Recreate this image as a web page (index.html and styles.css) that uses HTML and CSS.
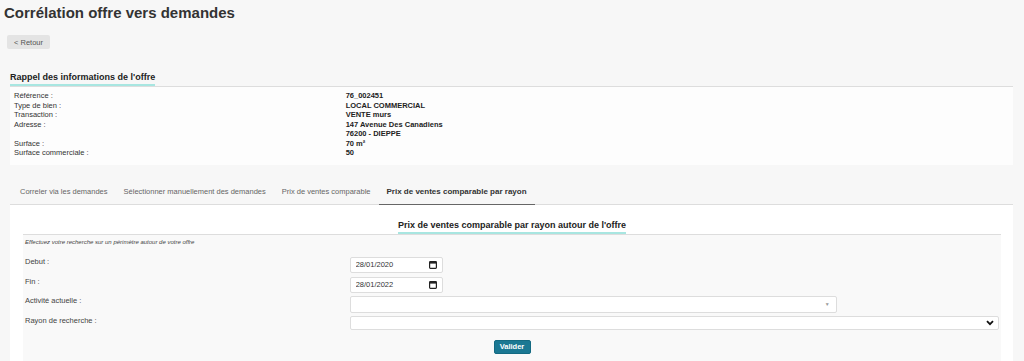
FILE: index.html
```html
<!DOCTYPE html>
<html lang="fr">
<head>
    <meta charset="UTF-8">
    <meta name="viewport" content="width=device-width, initial-scale=1.0">
    <title>Corrélation offre vers demandes</title>
    <link rel="stylesheet" href="styles.css">
</head>
<body>
    <h1>Corrélation offre vers demandes</h1>
    <button type="button" class="btn-back">&lt; Retour</button>

    <div class="section">
        <h2 class="underlined">Rappel des informations de l'offre</h2>
        <div class="info-panel">
            <div class="info-row"><span>Référence :</span><b>76_002451</b></div>
            <div class="info-row"><span>Type de bien :</span><b>LOCAL COMMERCIAL</b></div>
            <div class="info-row"><span>Transaction :</span><b>VENTE murs</b></div>
            <div class="info-row"><span>Adresse :</span><b>147 Avenue Des Canadiens<br>76200 - DIEPPE</b></div>
            <div class="info-row"><span>Surface :</span><b>70 m²</b></div>
            <div class="info-row"><span>Surface commerciale :</span><b>50</b></div>
        </div>
    </div>

    <div class="section tabs-section">
        <ul class="nav-tabs">
            <li>Correler via les demandes</li>
            <li>Sélectionner manuellement des demandes</li>
            <li>Prix de ventes comparable</li>
            <li class="active">Prix de ventes comparable par rayon</li>
        </ul>
        <div class="tab-content">
            <h3 class="underlined">Prix de ventes comparable par rayon autour de l'offre</h3>
            <form class="search-form">
                <p class="hint">Effectuez votre recherche sur un périmètre autour de votre offre</p>
                <div class="form-row first">
                    <label for="debut">Debut :</label>
                    <div class="date-field">
                        <input type="text" id="debut" value="28/01/2020">
                        <svg width="8" height="8" viewBox="0 0 8 8"><rect x="0.6" y="0.6" width="6.8" height="6.8" rx="0.8" fill="none" stroke="#222" stroke-width="1.2"/><rect x="0.6" y="0.6" width="6.8" height="2" fill="#222"/></svg>
                    </div>
                </div>
                <div class="form-row">
                    <label for="fin">Fin :</label>
                    <div class="date-field">
                        <input type="text" id="fin" value="28/01/2022">
                        <svg width="8" height="8" viewBox="0 0 8 8"><rect x="0.6" y="0.6" width="6.8" height="6.8" rx="0.8" fill="none" stroke="#222" stroke-width="1.2"/><rect x="0.6" y="0.6" width="6.8" height="2" fill="#222"/></svg>
                    </div>
                </div>
                <div class="form-row">
                    <label>Activité actuelle :</label>
                    <div class="combo">
                        <span class="combo-arrow">▼</span>
                    </div>
                </div>
                <div class="form-row">
                    <label for="rayon">Rayon de recherche :</label>
                    <div class="select-wrap">
                        <select id="rayon"><option></option></select>
                        <svg class="chevron" width="8" height="6" viewBox="0 0 8 6"><path d="M1 1.2 L4 4.2 L7 1.2" fill="none" stroke="#111" stroke-width="1.8"/></svg>
                    </div>
                </div>
                <div class="form-actions">
                    <button type="submit" class="btn-primary">Valider</button>
                </div>
            </form>
        </div>
    </div>
</body>
</html>
```
FILE: styles.css
```css
body {
    margin: 0;
    padding: 3px 0 0 0;
    background-color: #f7f7f7;
    font-family: "Liberation Sans", Arial, sans-serif;
    color: #333;
}

h1 {
    margin: 0 0 12px 4px;
    font-size: 15px;
    line-height: 20px;
    color: #333;
}

.btn-back {
    display: block;
    margin-left: 7px;
    width: 43px;
    height: 14px;
    padding: 0;
    font-family: inherit;
    font-size: 7.5px;
    color: #555;
    background-color: #e4e4e4;
    border: none;
    border-radius: 2px;
}

.section {
    margin: 0 11px 0 10px;
}

.underlined {
    display: table;
    margin: 0;
    font-size: 9px;
    line-height: 12px;
    color: #222;
    border-bottom: 2px solid #a8e6e1;
}

h2.underlined {
    margin-top: 22px;
    padding-bottom: 1px;
}

.info-panel {
    background-color: #fdfdfd;
    border-top: 1px solid #ddd;
    padding: 4px 4px 7px;
    font-size: 7.5px;
    line-height: 9.5px;
}

.info-row {
    display: grid;
    grid-template-columns: 1fr 2fr;
}

.info-row b {
    color: #222;
}

.tabs-section {
    margin-top: 16px;
}

.nav-tabs {
    display: flex;
    align-items: flex-end;
    margin: 0;
    padding: 0 0 0 2px;
    list-style: none;
}

.nav-tabs li {
    padding: 6px 8px 7px;
    font-size: 7.5px;
    line-height: 10px;
    color: #666;
}

.nav-tabs li.active {
    font-size: 8px;
    color: #333;
    font-weight: bold;
    border-bottom: 1px solid #666;
    margin-bottom: -1px;
}

.tab-content {
    background-color: #fff;
    border-top: 1px solid #ddd;
    padding: 14px 12px 20px 13px;
}

.tab-content .underlined {
    margin: 0 auto;
    padding-bottom: 1px;
}

.search-form {
    background-color: #f9f9f9;
    border-top: 1px solid #ddd;
    padding: 3px 2px 8px;
    font-size: 7.5px;
}

.hint {
    margin: 0 0 10px;
    font-size: 6px;
    line-height: 9px;
    font-style: italic;
    color: #444;
}

.form-row {
    display: grid;
    grid-template-columns: 1fr 2fr;
    margin-bottom: 3px;
}

.form-row.first {
    margin-bottom: 4px;
}

.form-row label {
    line-height: 9px;
    color: #444;
}

.date-field {
    display: flex;
    align-items: center;
    box-sizing: border-box;
    width: 93px;
    height: 16px;
    padding: 0 5px 0 5px;
    background-color: #fff;
    border: 1px solid #ddd;
    border-radius: 2px;
}

.date-field input {
    flex: 1;
    min-width: 0;
    padding: 0;
    border: none;
    font-family: inherit;
    font-size: 7.5px;
    color: #333;
    background: transparent;
}

.combo {
    position: relative;
    box-sizing: border-box;
    width: 75%;
    height: 17px;
    background-color: #fff;
    border: 1px solid #ddd;
    border-radius: 2px;
}

.combo-arrow {
    position: absolute;
    right: 6px;
    top: 4px;
    font-size: 5px;
    color: #999;
}

.select-wrap {
    position: relative;
}

.select-wrap select {
    display: block;
    box-sizing: border-box;
    width: 100%;
    height: 14px;
    padding: 0 4px;
    background-color: #fff;
    border: 1px solid #ddd;
    border-radius: 2px;
    appearance: none;
    font-family: inherit;
    font-size: 7.5px;
}

.chevron {
    position: absolute;
    right: 5px;
    top: 4px;
    pointer-events: none;
}

.form-actions {
    text-align: center;
    padding-top: 7px;
}

.btn-primary {
    width: 37px;
    height: 14px;
    padding: 0;
    font-family: inherit;
    font-size: 7.5px;
    font-weight: bold;
    color: #fff;
    background-color: #1b7893;
    border: 1px solid #146a82;
    border-radius: 2px;
}
```
